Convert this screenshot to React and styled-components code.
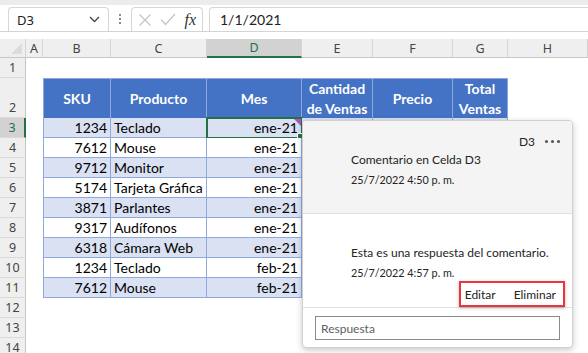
import styled, { createGlobalStyle } from "styled-components";

const GlobalStyle = createGlobalStyle`
  body {
    margin: 0;
    background: #ffffff;
    font-family: "Lato", "Liberation Sans", sans-serif;
  }
  * { box-sizing: border-box; }
`;

const COLS = [26, 17, 68, 96, 95, 71, 80, 55, 80];
const LETTERS = ["A", "B", "C", "D", "E", "F", "G", "H"];
const GREEN = "#217346";

const rows = [
  ["1234", "Teclado", "ene-21"],
  ["7612", "Mouse", "ene-21"],
  ["9712", "Monitor", "ene-21"],
  ["5174", "Tarjeta Gráfica", "ene-21"],
  ["3871", "Parlantes", "ene-21"],
  ["9317", "Audífonos", "ene-21"],
  ["6318", "Cámara Web", "ene-21"],
  ["1234", "Teclado", "feb-21"],
  ["7612", "Mouse", "feb-21"],
];

const headers = ["SKU", "Producto", "Mes", "Cantidad de Ventas", "Precio", "Total Ventas"];

const Page = styled.div`
  position: relative;
  width: 588px;
  height: 353px;
  overflow: hidden;
`;

const Toolbar = styled.div`
  display: flex;
  align-items: center;
  height: 32px;
  padding: 2px 0 0 8px;
  border-top: 5px solid #ececec;
  border-bottom: 1px solid #d4d4d4;
  font-family: "Noto Sans", sans-serif;
`;

const Box = styled.div`
  display: flex;
  align-items: center;
  height: 24px;
  width: ${(p) => p.$w}px;
  border: 1px solid #d6d6d6;
  border-bottom: none;
  border-radius: 4px 4px 0 0;
  padding: 0 8px;
  color: #222;
  font-size: 13px;
`;

const NameBox = styled(Box)`
  justify-content: space-between;
`;

const Grip = styled.div`
  width: 22px;
  display: flex;
  flex-direction: column;
  align-items: center;
  gap: 2px;
  span {
    width: 2px;
    height: 2px;
    background: #8a8a8a;
  }
`;

const FxBox = styled(Box)`
  justify-content: space-between;
  padding: 0 6px;
  margin-right: 6px;
`;

const Fx = styled.span`
  font-family: "Liberation Serif", serif;
  font-style: italic;
  font-size: 16px;
  color: #333;
`;

const Formula = styled(Box)`
  flex: 1;
  border-right: none;
  border-radius: 4px 0 0 0;
  padding-left: 10px;
  font-family: "Lato", sans-serif;
  font-size: 14px;
`;

const Sheet = styled.div`
  display: grid;
  grid-template-columns: ${COLS.map((c) => c + "px").join(" ")};
  grid-template-rows: 19px 20px 40px repeat(12, 20px);
  margin-top: 7px;
`;

const ColHead = styled.div`
  display: flex;
  align-items: center;
  justify-content: center;
  background: ${(p) => (p.$on ? "#d2d2d2" : "#efefef")};
  color: ${(p) => (p.$on ? GREEN : "#444")};
  border-right: 1px solid #d5d5d5;
  border-bottom: ${(p) => (p.$on ? `2px solid ${GREEN}` : "1px solid #c6c6c6")};
  font-family: "Noto Sans", sans-serif;
  font-size: 12.5px;
`;

const Corner = styled(ColHead)`
  position: relative;
  &::after {
    content: "";
    position: absolute;
    right: 3px;
    bottom: 3px;
    border-style: solid;
    border-width: 0 0 11px 11px;
    border-color: transparent transparent #dcdcdc transparent;
  }
`;

const RowHead = styled.div`
  display: flex;
  align-items: flex-end;
  justify-content: center;
  padding-bottom: 1px;
  background: ${(p) => (p.$on ? "#d2d2d2" : "#efefef")};
  color: ${(p) => (p.$on ? GREEN : "#444")};
  border-bottom: 1px solid #dadada;
  border-right: ${(p) => (p.$on ? `2px solid ${GREEN}` : "1px solid #c6c6c6")};
  font-family: "Noto Sans", sans-serif;
  font-size: 12.5px;
`;

const Blank = styled.div``;

const HeadCell = styled.div`
  display: flex;
  align-items: center;
  justify-content: center;
  text-align: center;
  line-height: 20px;
  background: #4472c4;
  color: #fff;
  font-weight: 700;
  font-size: 14px;
  border-top: 1px solid #8ea9db;
  border-right: 1px solid #8ea9db;
  border-left: ${(p) => (p.$first ? "1px solid #8ea9db" : "none")};
`;

const Cell = styled.div`
  position: relative;
  display: flex;
  align-items: center;
  justify-content: ${(p) => (p.$right ? "flex-end" : "flex-start")};
  padding: 0 3px;
  background: ${(p) => (p.$band ? "#d9e1f2" : "#ffffff")};
  color: #000;
  font-size: 14px;
  border-right: 1px solid #8ea9db;
  border-bottom: 1px solid #8ea9db;
  border-left: ${(p) => (p.$first ? "1px solid #8ea9db" : "none")};
  white-space: nowrap;
`;

const Selection = styled.div`
  position: absolute;
  left: -1px;
  top: -1px;
  right: -2px;
  bottom: -2px;
  border: 2px solid ${GREEN};
  pointer-events: none;
  &::before {
    content: "";
    position: absolute;
    right: 0;
    top: 0;
    border-style: solid;
    border-width: 0 7px 7px 0;
    border-color: transparent #b44ec2 transparent transparent;
  }
  &::after {
    content: "";
    position: absolute;
    right: -4px;
    bottom: -4px;
    width: 6px;
    height: 6px;
    background: ${GREEN};
    border: 1px solid #fff;
  }
`;

const Panel = styled.div`
  position: absolute;
  left: 302px;
  top: 120px;
  width: 271px;
  height: 228px;
  background: #ffffff;
  border: 1px solid #d0d0d0;
  border-radius: 4px;
  box-shadow: 0 2px 6px rgba(0, 0, 0, 0.22);
  display: flex;
  flex-direction: column;
  overflow: hidden;
  font-family: "Lato", "Noto Sans", sans-serif;
  color: #242424;
  white-space: nowrap;
`;

const Thread = styled.div`
  flex: 0 0 93px;
  background: #f4f4f4;
  border-bottom: 1px solid #e1e1e1;
  padding: 10px 12px 0 48px;
`;

const ThreadTop = styled.div`
  display: flex;
  justify-content: flex-end;
  align-items: center;
  gap: 10px;
  font-size: 12px;
  height: 20px;
`;

const More = styled.span`
  display: flex;
  gap: 3px;
  span {
    width: 3px;
    height: 3px;
    border-radius: 50%;
    background: #555;
  }
`;

const Body = styled.div`
  font-size: 12px;
  line-height: 17px;
`;

const Stamp = styled.div`
  font-size: 10.8px;
  line-height: 15px;
  margin-top: 4px;
`;

const Reply = styled.div`
  flex: 0 0 94px;
  display: flex;
  flex-direction: column;
  padding: 30px 0 0 48px;
  border-bottom: 1px solid #e1e1e1;
`;

const Actions = styled.div`
  display: flex;
  justify-content: flex-end;
  margin: auto 7px 0 0;
`;

const Highlight = styled.div`
  display: flex;
  gap: 18px;
  height: 26px;
  align-items: center;
  padding: 0 7px 0 4px;
  border: 2px solid #e8383d;
  box-shadow: 0 1px 3px rgba(0, 0, 0, 0.3);
  font-size: 12px;
`;

const InputRow = styled.div`
  padding: 8px 12px 0 12px;
`;

const Input = styled.div`
  height: 24px;
  border: 1px solid #8a8a8a;
  padding: 0 5px;
  display: flex;
  align-items: center;
  font-size: 12px;
  color: #616161;
`;

function Sheetgrid() {
  const cells = [];
  cells.push(<Corner key="corner" />);
  LETTERS.forEach((l) => cells.push(<ColHead key={l} $on={l === "D"}>{l}</ColHead>));

  for (let r = 1; r <= 14; r++) {
    cells.push(<RowHead key={"r" + r} $on={r === 3}>{r}</RowHead>);
    cells.push(<Blank key={"a" + r} />);
    if (r === 2) {
      headers.forEach((h, i) =>
        cells.push(<HeadCell key={"h" + i} $first={i === 0}>{h}</HeadCell>)
      );
    } else if (r >= 3 && r <= 11) {
      const d = rows[r - 3];
      const band = r % 2 === 1;
      cells.push(<Cell key={"b" + r} $first $right $band={band}>{d[0]}</Cell>);
      cells.push(<Cell key={"c" + r} $band={band}>{d[1]}</Cell>);
      cells.push(
        <Cell key={"d" + r} $right $band={band}>
          {d[2]}
          {r === 3 && <Selection />}
        </Cell>
      );
      ["e", "f", "g"].forEach((c) => cells.push(<Cell key={c + r} $band={band} />));
    } else {
      ["b", "c", "d", "e", "f", "g"].forEach((c) => cells.push(<Blank key={c + r} />));
    }
    cells.push(<Blank key={"h" + r} />);
  }
  return <Sheet>{cells}</Sheet>;
}

export default function App() {
  return (
    <Page>
      <GlobalStyle />
      <Toolbar>
        <NameBox $w={101}>
          D3
          <svg width="11" height="7" viewBox="0 0 11 7">
            <path d="M1 1l4.5 4.5L10 1" fill="none" stroke="#444" strokeWidth="1.3" />
          </svg>
        </NameBox>
        <Grip>
          <span />
          <span />
          <span />
        </Grip>
        <FxBox $w={72}>
          <svg width="14" height="14" viewBox="0 0 14 14">
            <path d="M1.5 1.5l11 11M12.5 1.5l-11 11" stroke="#c4c4c4" strokeWidth="1.2" />
          </svg>
          <svg width="16" height="13" viewBox="0 0 16 13">
            <path d="M1 6.5l4.5 5L15 1" fill="none" stroke="#c4c4c4" strokeWidth="1.2" />
          </svg>
          <Fx>fx</Fx>
        </FxBox>
        <Formula>1/1/2021</Formula>
      </Toolbar>
      <Sheetgrid />
      <Panel>
        <Thread>
          <ThreadTop>
            D3
            <More>
              <span />
              <span />
              <span />
            </More>
          </ThreadTop>
          <Body>Comentario en Celda D3</Body>
          <Stamp>25/7/2022 4:50 p. m.</Stamp>
        </Thread>
        <Reply>
          <Body>Esta es una respuesta del comentario.</Body>
          <Stamp>25/7/2022 4:57 p. m.</Stamp>
          <Actions>
            <Highlight>
              <span>Editar</span>
              <span>Eliminar</span>
            </Highlight>
          </Actions>
        </Reply>
        <InputRow>
          <Input>Respuesta</Input>
        </InputRow>
      </Panel>
    </Page>
  );
}
